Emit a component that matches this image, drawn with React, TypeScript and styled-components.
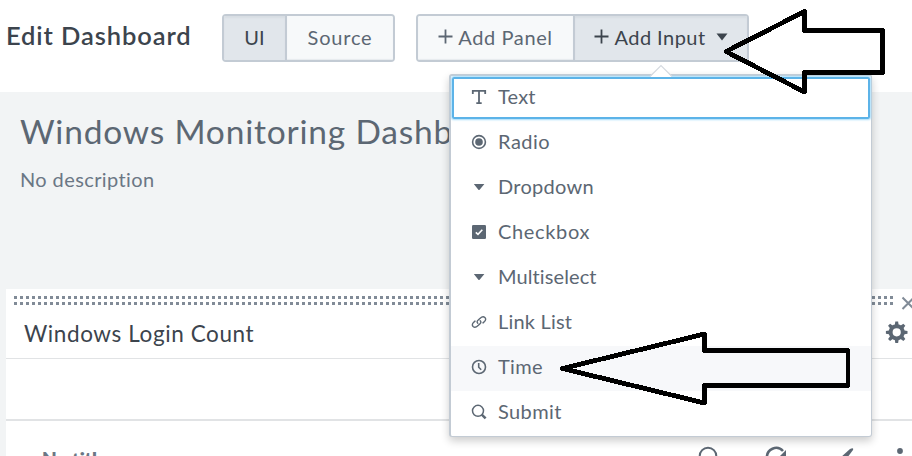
import React from "react";
import styled, { createGlobalStyle } from "styled-components";

const Global = createGlobalStyle`
  body { margin: 0; background: #fff; overflow: hidden; }
  * { box-sizing: border-box; }
`;

const Page = styled.div`
  position: relative;
  width: 912px;
  height: 456px;
  overflow: hidden;
  display: flex;
  flex-direction: column;
  background: #f2f4f5;
  font-family: Lato, "Liberation Sans", sans-serif;
  color: #5c6773;
`;

const Header = styled.header`
  display: flex;
  align-items: flex-start;
  height: 92px;
  padding: 14px 0 0 6px;
  background: #fff;
  flex: none;
`;

const PageTitle = styled.h1`
  margin: 0;
  width: 216px;
  font-size: 25.5px;
  line-height: 42px;
  font-weight: 600;
  letter-spacing: 0.9px;
  color: #3c444d;
  white-space: nowrap;
`;

const ButtonGroup = styled.div<{ $gap?: number }>`
  display: flex;
  height: 48px;
  margin-right: ${(p) => p.$gap ?? 0}px;
  border: 2px solid #c3cbd4;
  border-radius: 4px;
  overflow: hidden;
`;

const Button = styled.button<{ $w: number; $active?: boolean; $spacing?: number }>`
  display: flex;
  align-items: center;
  justify-content: center;
  width: ${(p) => p.$w}px;
  padding: 0 0 3px;
  border: 0;
  background: ${(p) => (p.$active ? "#e1e6eb" : "#f7f9fa")};
  box-shadow: ${(p) => (p.$active ? "inset 0 2px 2px #d7dde3" : "inset 0 -1px 1px #e6eaee")};
  color: ${(p) => (p.$active ? "#3c444d" : "#5c6773")};
  font-family: inherit;
  font-size: 20px;
  letter-spacing: ${(p) => p.$spacing ?? 0}px;
  white-space: nowrap;
  & + & { border-left: 2px solid #c3cbd4; }
  svg { flex: none; }
`;

const Plus = styled.svg`
  width: 15px;
  height: 15px;
  margin-right: 5px;
`;

const Caret = styled.svg`
  width: 12px;
  height: 8px;
  margin-left: 10px;
`;

const Intro = styled.section`
  height: 197px;
  padding: 17px 0 0 20px;
  flex: none;
`;

const DashTitle = styled.h2`
  margin: 0;
  font-size: 33.5px;
  line-height: 44px;
  font-weight: 400;
  letter-spacing: 0.8px;
  white-space: nowrap;
`;

const Description = styled.p`
  margin: 14px 0 0;
  font-size: 20px;
  line-height: 24px;
  letter-spacing: 0.4px;
  color: #6b7785;
`;

const Panel = styled.section`
  display: flex;
  flex-direction: column;
  flex: 1;
  margin-left: 6px;
  background: #fff;
`;

const PanelTop = styled.div`
  display: flex;
  height: 70px;
  flex: none;
  border-bottom: 1px solid #e1e3e5;
`;

const PanelMain = styled.div`
  width: 890px;
  padding: 7px 0 0 8px;
  flex: none;
`;

const DragHandle = styled.div`
  width: 879px;
  height: 9px;
  background: repeating-linear-gradient(90deg, transparent 0 3px, #fff 3px 6px),
    linear-gradient(#818b97 0 3px, #fff 3px 6px, #818b97 6px 9px);
`;

const PanelTitle = styled.h3`
  margin: 15px 0 0 10px;
  font-size: 22.5px;
  line-height: 28px;
  font-weight: 400;
  letter-spacing: 0.6px;
  color: #3c444d;
`;

const PanelTools = styled.div`
  display: flex;
  flex-direction: column;
  margin-left: -11px;
  padding-top: 7px;
  svg { flex: none; }
`;

const InputsRow = styled.div`
  height: 62px;
  flex: none;
  border-bottom: 2px solid #e1e3e5;
`;

const ElementRow = styled.div`
  display: flex;
  height: 35px;
  overflow: hidden;
  padding-left: 36px;
`;

const ElementTitle = styled.span`
  width: 650px;
  padding-top: 26px;
  font-size: 19px;
  line-height: 24px;
  font-weight: 800;
  color: #6b7785;
`;

const ElementTools = styled.svg`
  width: 220px;
  height: 35px;
  flex: none;
`;

const Menu = styled.div`
  position: absolute;
  left: 449px;
  top: 74px;
  width: 423px;
  height: 363px;
  border: 2px solid #c3cbd4;
  border-right-width: 1px;
  border-bottom-width: 1px;
  border-radius: 3px;
  background: #fff;
  box-shadow: 0 4px 9px rgba(0, 0, 0, 0.2);
`;

const MenuTip = styled.svg`
  position: absolute;
  left: 198px;
  top: -12px;
  width: 24px;
  height: 13px;
`;

const Item = styled.div<{ $focus?: boolean; $hover?: boolean }>`
  display: flex;
  align-items: center;
  height: 45px;
  padding: 0 0 3px 20px;
  font-size: 20px;
  background: ${(p) => (p.$hover ? "#f7f8fa" : "transparent")};
  position: relative;
  ${(p) =>
    p.$focus &&
    `&::after {
      content: "";
      position: absolute;
      inset: 1px 1px 2px 1px;
      border: 2px solid #5cb3e8;
      border-radius: 2px;
      box-shadow: 0 0 2px 1px #a5dcfa;
    }`}
`;

const Glyph = styled.svg`
  width: 16px;
  height: 16px;
  margin-right: 11px;
  flex: none;
`;

const Label = styled.span<{ $spacing: number }>`
  padding-bottom: 2px;
  letter-spacing: ${(p) => p.$spacing}px;
`;

const Annotations = styled.svg`
  position: absolute;
  left: 0;
  top: 0;
  pointer-events: none;
`;

const ink = "#5c6773";

const down = <path d="M3 5.2Q2.4 4.9 3 4.9H13Q13.6 4.9 13 5.4L8.6 10.8Q8 11.4 7.4 10.8Z" fill={ink} />;

const items: { label: string; spacing: number; icon: React.ReactNode; focus?: boolean; hover?: boolean }[] = [
  {
    label: "Text",
    spacing: 0.2,
    focus: true,
    icon: <path d="M1.8 5V1.8H14.2V5M8 1.8V14.2M5.3 14.2H10.7" fill="none" stroke={ink} strokeWidth="1.8" />,
  },
  {
    label: "Radio",
    spacing: 0.5,
    icon: (
      <>
        <circle cx="8" cy="8" r="6.4" fill="none" stroke={ink} strokeWidth="1.6" />
        <circle cx="8" cy="8" r="3.8" fill={ink} />
      </>
    ),
  },
  { label: "Dropdown", spacing: 0.3, icon: down },
  {
    label: "Checkbox",
    spacing: 0.65,
    icon: (
      <>
        <rect x="1" y="1" width="14" height="14" rx="1.3" fill={ink} />
        <path d="M4.8 8.3L7 10.4L11.3 5.8" fill="none" stroke="#fff" strokeWidth="1.6" />
      </>
    ),
  },
  { label: "Multiselect", spacing: 0.1, icon: down },
  {
    label: "Link List",
    spacing: 0.2,
    icon: (
      <g fill="none" stroke={ink} strokeWidth="1.4" strokeLinecap="round">
        <path d="M6.8 9.3C5.7 8.2 6 7 7.2 6L9.2 4.2C10.7 2.8 12.7 2.5 13.9 3.5C15.1 4.6 14.8 6.4 13.5 7.6L12 8.9" />
        <path d="M9.2 6.7C10.3 7.8 10 9 8.8 10L6.8 11.8C5.3 13.2 3.3 13.5 2.1 12.5C0.9 11.4 1.2 9.6 2.5 8.4L4 7.1" />
      </g>
    ),
  },
  {
    label: "Time",
    spacing: 0.3,
    hover: true,
    icon: (
      <g fill="none" stroke={ink} strokeWidth="1.6">
        <circle cx="8" cy="8" r="6.5" />
        <path d="M7.7 4V8.2L10.2 10.8" />
      </g>
    ),
  },
  {
    label: "Submit",
    spacing: 0.4,
    icon: (
      <g fill="none" stroke={ink}>
        <circle cx="7" cy="6.8" r="5.5" strokeWidth="1.5" />
        <path d="M10.8 10.6L14.6 14.4" strokeWidth="2.5" />
      </g>
    ),
  },
];

const PlusIcon = () => (
  <Plus viewBox="0 0 15 15">
    <path d="M7.5 0.5V14.5M0.5 7.5H14.5" stroke="currentColor" strokeWidth="1.8" />
  </Plus>
);

const teeth = [0, 45, 90, 135, 180, 225, 270, 315];

export default function App() {
  return (
    <Page>
      <Global />
      <Header>
        <PageTitle>Edit Dashboard</PageTitle>
        <ButtonGroup $gap={21}>
          <Button $w={61} $active>UI</Button>
          <Button $w={108} $spacing={0.8}>Source</Button>
        </ButtonGroup>
        <ButtonGroup>
          <Button $w={155} $spacing={0.6}><PlusIcon />Add Panel</Button>
          <Button $w={174} $active $spacing={0.45}>
            <PlusIcon />Add Input
            <Caret viewBox="0 0 12 8"><path d="M0.5 0.5H11.5L6 7.5Z" fill="currentColor" /></Caret>
          </Button>
        </ButtonGroup>
      </Header>
      <Intro>
        <DashTitle>Windows Monitoring Dashb</DashTitle>
        <Description>No description</Description>
      </Intro>
      <Panel>
        <PanelTop>
          <PanelMain>
            <DragHandle />
            <PanelTitle>Windows Login Count</PanelTitle>
          </PanelMain>
          <PanelTools>
            <svg width="27" height="58" viewBox="885 296 27 58">
              <path d="M902.5 297.5L914 309M914 297.5L902.5 309" stroke="#818b97" strokeWidth="2" />
              <g fill={ink}>
                {teeth.map((a) => (
                  <path key={a} d="M894.6 326L895.3 321.5H898.1L898.8 326Z" transform={`rotate(${a} 896.7 332.3)`} />
                ))}
              </g>
              <circle cx="896.7" cy="332.3" r="6.1" fill="none" stroke={ink} strokeWidth="4" />
            </svg>
          </PanelTools>
        </PanelTop>
        <InputsRow />
        <ElementRow>
          <ElementTitle>No title</ElementTitle>
          <ElementTools viewBox="692 421 220 35">
            <g fill="none" stroke={ink} strokeWidth="2">
              <circle cx="708" cy="456" r="8.3" />
              <path d="M767 458A9.2 9.2 0 0 1 783 451" strokeWidth="2.6" />
            </g>
            <path d="M786 450V458H778Z" fill={ink} />
            <path d="M840 458L850 449Q854 447 853 450L847 458Z" fill={ink} />
            <circle cx="900" cy="451" r="2.9" fill={ink} />
          </ElementTools>
        </ElementRow>
      </Panel>
      <Menu>
        {items.map((it) => (
          <Item key={it.label} $focus={it.focus} $hover={it.hover}>
            <Glyph viewBox="0 0 16 16">{it.icon}</Glyph>
            <Label $spacing={it.spacing}>{it.label}</Label>
          </Item>
        ))}
        <MenuTip viewBox="0 0 24 13">
          <path d="M1 13L12 2L23 13Z" fill="#fff" />
          <path d="M1 12.5L12 1.5L23 12.5" fill="none" stroke="#d5dae0" strokeWidth="1.2" />
        </MenuTip>
      </Menu>
      <Annotations width="912" height="456" viewBox="0 0 912 456">
        <g fill="none" stroke="#000" strokeWidth="4.8" strokeLinejoin="round" shapeRendering="crispEdges">
          <path d="M726 51.5L804.5 11.5V30.5H882.5V72.5H804.5V92Z" />
          <path d="M562.5 368.5L704.5 334V350.5H848V385.5H704.5V403Z" />
        </g>
      </Annotations>
    </Page>
  );
}
